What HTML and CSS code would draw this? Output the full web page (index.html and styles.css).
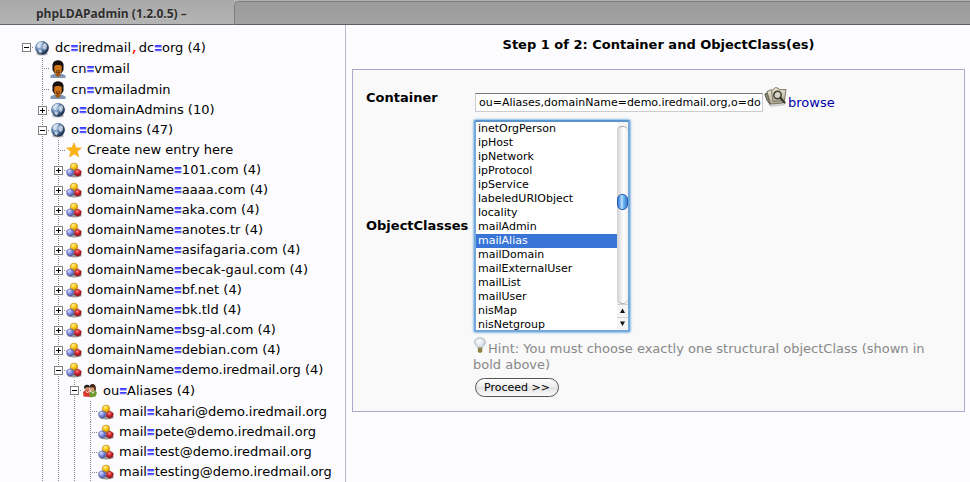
FILE: index.html
```html
<!DOCTYPE html>
<html lang="en">
<head>
<meta charset="utf-8">
<title>phpLDAPadmin (1.2.0.5) –</title>
<link rel="stylesheet" href="styles.css">
</head>
<body>
<svg class="defs" width="0" height="0" aria-hidden="true">
  <defs>
    <radialGradient id="gGlobe" cx=".35" cy=".35" r=".7"><stop offset="0" stop-color="#c9dcf0"/><stop offset=".5" stop-color="#5b7eaa"/><stop offset="1" stop-color="#14233f"/></radialGradient>
    <radialGradient id="gY" cx=".4" cy=".3" r=".7"><stop offset="0" stop-color="#fff29a"/><stop offset=".5" stop-color="#ffc814"/><stop offset="1" stop-color="#c98a00"/></radialGradient>
    <radialGradient id="gB" cx=".35" cy=".3" r=".8"><stop offset="0" stop-color="#dcdfff"/><stop offset=".5" stop-color="#7f8be0"/><stop offset="1" stop-color="#3e469c"/></radialGradient>
    <radialGradient id="gR" cx=".4" cy=".3" r=".8"><stop offset="0" stop-color="#ff8c84"/><stop offset=".45" stop-color="#d3242c"/><stop offset="1" stop-color="#7d0c14"/></radialGradient>
    <linearGradient id="gFolder" x1="0" y1="0" x2="0" y2="1"><stop offset="0" stop-color="#efe8d6"/><stop offset="1" stop-color="#b3ab94"/></linearGradient>
    <radialGradient id="gBulb" cx=".4" cy=".35" r=".7"><stop offset="0" stop-color="#fff"/><stop offset="1" stop-color="#c3d0dc"/></radialGradient>
    <symbol id="globe" viewBox="0 0 16 16">
      <ellipse cx="8" cy="14" rx="6" ry="1.6" fill="#bbb"/>
      <circle cx="8" cy="7.8" r="6.9" fill="url(#gGlobe)"/>
      <path d="M3 4.5 5.5 2 9 1.8 7.8 4 5.5 5.2 6.5 7 4.8 8.2 3 7zM9.3 4.2l2-1.2 1.8 2.3-.8 3.8-2 1-1.4-2.3zM4.5 9.5l2.8.3.8 1.8-1.6 2-1.9-1.6z" fill="#e9eff5" opacity=".7"/>
    </symbol>
    <symbol id="person" viewBox="0 0 16 18">
      <path d="M.5 18v-2.5l4-2h7l4 2V18z" fill="#7f97b5"/>
      <path d="M5.5 12h5v3.5L8 17l-2.500-1.500z" fill="#9a5513"/>
      <path d="M2.500 10V4.500C3 1.500 5.500.3 8 .3s5 1.200 5.500 4.200V10l-2 3h-7z" fill="#160f0b"/>
      <path d="M4.300 6.500C5 4.600 11 4.600 11.700 6.500v3.800c0 2.200-1.700 4-3.700 4s-3.700-1.800-3.700-4z" fill="#cf7417"/>
      <path d="M6 10.500c1.200-.8 2.800-.8 4 0v2.300L8 14l-2-1.200z" fill="#7d410f"/>
      <path d="M7 11.500h2" stroke="#b86823" stroke-width=".8"/>
    </symbol>
    <symbol id="balls" viewBox="0 0 16 16">
      <ellipse cx="8.500" cy="13.500" rx="7.300" ry="1.900" fill="#9a9a9a"/>
      <circle cx="8" cy="4.700" r="3.700" fill="url(#gY)" stroke="#a37a20" stroke-width=".5"/>
      <path d="M.7 8.500 4 6.700l3.600 1.700v3.800L4.200 14.200.9 12.300z" fill="url(#gB)" stroke="#4b5297" stroke-width=".6"/>
      <path d="M8.600 8.800 12 7l3.200 2.200-.3 3.400-3.400 1.600-3-1.700z" fill="url(#gR)" stroke="#7a1016" stroke-width=".6"/>
    </symbol>
    <symbol id="star" viewBox="0 0 16 16">
      <path d="M8 .8l2 4.900 5.400.3-4.200 3.500 1.700 5.300L8.200 12l-4.700 3 1.200-5.400L.6 6l5.300-.4z" fill="#fcb316" stroke="#f0a010" stroke-width=".5"/>
    </symbol>
    <symbol id="group" viewBox="0 0 16 16">
      <path d="M1.500 13.500 1 9l2.500-2h4L8 14z" fill="#d8392d"/>
      <path d="M8 14.500 7.500 9.500l3-2h3L15 10l-1.500 3.500z" fill="#6d9a2b"/>
      <circle cx="5" cy="5.300" r="2.500" fill="#c98b61"/>
      <path d="M2 5.500C1.700 2.500 3.500 1.600 5.500 1.800s2.500 1.700 2.300 2.900L5.500 4z" fill="#222"/>
      <circle cx="10.500" cy="5.800" r="2.500" fill="#d69b71"/>
      <path d="M7.500 4.500C7.500 2 9 .9 10.800 1s3.700 2 3 6.500L12.500 8l-.5-3.500z" fill="#462719"/>
      <path d="M4 8l1.500 2L7 8M9.500 8.500l1.300 1.800 1.500-2" stroke="#fff" stroke-width=".8" fill="none"/>
    </symbol>
    <symbol id="browse" viewBox="0 0 24 22">
      <path d="M4 18.500 22 17l-2 2.500L7 21z" fill="#aaa" opacity=".5"/>
      <path d="M.8 8l3-1.200L6 18.500 2.800 14z" fill="#8c8674" stroke="#4a473e" stroke-width=".8"/>
      <path d="M3 5.500 7.500 3.500 8.500 5 20.500 4.500 18.500 17 6.500 18z" fill="url(#gFolder)" stroke="#69655a" stroke-width=".9"/>
      <path d="M7.500 5 11.500 1.500l3 .8.500 1.400L22 3.500 20.500 14.500 9 15.500z" fill="url(#gFolder)" stroke="#706b5f" stroke-width=".9"/>
      <circle cx="13.500" cy="9" r="3.700" fill="#d6d4c6" stroke="#414137" stroke-width="1.500"/>
      <path d="M16.300 11.800 20.500 16.500" stroke="#3c392e" stroke-width="2.300" stroke-linecap="round"/>
    </symbol>
    <symbol id="bulb" viewBox="0 0 14 17">
      <path d="M4.500 11C4.500 9 1.200 8.300 1.200 5.200 1.200 2.400 3.600.8 6.500.8s5.300 1.600 5.300 4.400c0 3.100-3.200 3.800-3.200 5.800z" fill="url(#gBulb)" stroke="#a6afb8" stroke-width=".9"/>
      <path d="M4.400 10.500h4.300v4L7.500 16h-2l-1.100-1.500z" fill="#a99958"/>
      <path d="M4.400 12h4.300M4.400 14h4.300" stroke="#60572f" stroke-width=".7"/>
    </symbol>
  </defs>
</svg>

<header class="tabs"><div class="tab">phpLDAPadmin (1.2.0.5) –</div><div class="strip"></div></header>

<div class="page">
  <nav class="sidebar">
    <ul class="tree">
      <li>
        <div class="row tall"><span class="knot"><i class="box"></i></span><svg class="icon"><use href="#globe"/></svg><span class="name">dc<b>=</b>iredmail<b class="comma">,</b>dc<b>=</b>org (4)</span></div>
        <ul>
          <li><div class="row tall"><span class="knot"></span><svg class="icon person"><use href="#person"/></svg><span class="name">cn<b>=</b>vmail</span></div></li>
          <li><div class="row tall"><span class="knot"></span><svg class="icon person"><use href="#person"/></svg><span class="name">cn<b>=</b>vmailadmin</span></div></li>
          <li><div class="row"><span class="knot"><i class="box plus"></i></span><svg class="icon"><use href="#globe"/></svg><span class="name">o<b>=</b>domainAdmins (10)</span></div></li>
          <li>
            <div class="row"><span class="knot"><i class="box"></i></span><svg class="icon"><use href="#globe"/></svg><span class="name">o<b>=</b>domains (47)</span></div>
            <ul>
              <li><div class="row"><span class="knot"></span><svg class="icon"><use href="#star"/></svg><span class="name">Create new entry here</span></div></li>
              <li><div class="row"><span class="knot"><i class="box plus"></i></span><svg class="icon"><use href="#balls"/></svg><span class="name">domainName<b>=</b>101.com (4)</span></div></li>
              <li><div class="row"><span class="knot"><i class="box plus"></i></span><svg class="icon"><use href="#balls"/></svg><span class="name">domainName<b>=</b>aaaa.com (4)</span></div></li>
              <li><div class="row"><span class="knot"><i class="box plus"></i></span><svg class="icon"><use href="#balls"/></svg><span class="name">domainName<b>=</b>aka.com (4)</span></div></li>
              <li><div class="row"><span class="knot"><i class="box plus"></i></span><svg class="icon"><use href="#balls"/></svg><span class="name">domainName<b>=</b>anotes.tr (4)</span></div></li>
              <li><div class="row"><span class="knot"><i class="box plus"></i></span><svg class="icon"><use href="#balls"/></svg><span class="name">domainName<b>=</b>asifagaria.com (4)</span></div></li>
              <li><div class="row"><span class="knot"><i class="box plus"></i></span><svg class="icon"><use href="#balls"/></svg><span class="name">domainName<b>=</b>becak-gaul.com (4)</span></div></li>
              <li><div class="row"><span class="knot"><i class="box plus"></i></span><svg class="icon"><use href="#balls"/></svg><span class="name">domainName<b>=</b>bf.net (4)</span></div></li>
              <li><div class="row"><span class="knot"><i class="box plus"></i></span><svg class="icon"><use href="#balls"/></svg><span class="name">domainName<b>=</b>bk.tld (4)</span></div></li>
              <li><div class="row"><span class="knot"><i class="box plus"></i></span><svg class="icon"><use href="#balls"/></svg><span class="name">domainName<b>=</b>bsg-al.com (4)</span></div></li>
              <li><div class="row"><span class="knot"><i class="box plus"></i></span><svg class="icon"><use href="#balls"/></svg><span class="name">domainName<b>=</b>debian.com (4)</span></div></li>
              <li>
                <div class="row"><span class="knot"><i class="box"></i></span><svg class="icon"><use href="#balls"/></svg><span class="name">domainName<b>=</b>demo.iredmail.org (4)</span></div>
                <ul>
                  <li>
                    <div class="row tall"><span class="knot"><i class="box"></i></span><svg class="icon"><use href="#group"/></svg><span class="name">ou<b>=</b>Aliases (4)</span></div>
                    <ul>
                      <li><div class="row tall"><span class="knot"></span><svg class="icon"><use href="#balls"/></svg><span class="name">mail<b>=</b>kahari@demo.iredmail.org</span></div></li>
                      <li><div class="row"><span class="knot"></span><svg class="icon"><use href="#balls"/></svg><span class="name">mail<b>=</b>pete@demo.iredmail.org</span></div></li>
                      <li><div class="row"><span class="knot"></span><svg class="icon"><use href="#balls"/></svg><span class="name">mail<b>=</b>test@demo.iredmail.org</span></div></li>
                      <li><div class="row"><span class="knot"></span><svg class="icon"><use href="#balls"/></svg><span class="name">mail<b>=</b>testing@demo.iredmail.org</span></div></li>
                    </ul>
                  </li>
                </ul>
              </li>
            </ul>
          </li>
        </ul>
      </li>
    </ul>
  </nav>

  <main class="content">
    <h1>Step 1 of 2: Container and ObjectClass(es)</h1>
    <form class="panel">
      <label class="label top" for="container">Container</label>
      <div class="field">
        <input id="container" type="text" value="ou=Aliases,domainName=demo.iredmail.org,o=domains,dc=iredmail,dc=org">
        <a class="browse" href="#"><svg><use href="#browse"/></svg>browse</a>
      </div>
      <label class="label" for="classes">ObjectClasses</label>
      <div class="listbox">
        <select id="classes" size="15">
          <option>inetOrgPerson</option><option>ipHost</option><option>ipNetwork</option><option>ipProtocol</option><option>ipService</option><option>labeledURIObject</option><option>locality</option><option>mailAdmin</option><option selected>mailAlias</option><option>mailDomain</option><option>mailExternalUser</option><option>mailList</option><option>mailUser</option><option>nisMap</option><option>nisNetgroup</option>
        </select>
        <div class="scroll" aria-hidden="true">
          <span class="track"><span class="thumb"></span></span>
          <svg class="arrows" viewBox="0 0 11 26"><path d="M0 .5h11M0 13.500h11" stroke="#d0d0d0"/><path d="M5.500 4.500 8 9H3zM5.500 22 8 17.500H3z" fill="#111"/></svg>
        </div>
      </div>
      <div class="after">
        <p class="hint"><svg><use href="#bulb"/></svg>Hint: You must choose exactly one structural objectClass (shown in bold above)</p>
        <button type="button">Proceed &gt;&gt;</button>
      </div>
    </form>
  </main>
</div>
</body>
</html>
```
FILE: styles.css
```css
* { box-sizing: border-box; }
body {
  margin: 0;
  background: #fcfcfe;
  color: #000;
  font: 13px/20px Verdana, "DejaVu Sans", sans-serif;
  overflow: hidden;
}
.defs { position: absolute; }

.tabs { display: flex; height: 25px; background: #b2b2b2; }
.tab {
  width: 234px;
  padding-left: 36px;
  border-bottom: 1px solid #686868;
  background: linear-gradient(#a8a8a8, #b4b4b4);
  color: #2e2e2e;
  font: bold 12px/27px "Lucida Grande", "Open Sans", sans-serif;
  white-space: nowrap;
  text-shadow: 0 1px 0 #c8c8c8;
}
.strip {
  flex: 1;
  border: 1px solid #7d7d7d;
  border-width: 1px 0 1px 1px;
  border-bottom-color: #606060;
  border-top-left-radius: 5px;
  background: linear-gradient(#9b9b9b, #a2a2a2);
  margin-top: 1px;
}

.page { display: flex; min-height: calc(100vh - 25px); }
.sidebar {
  flex: 0 0 346px;
  padding: 12px 0 0 18px;
  border-right: 1px solid #b8b8d0;
  white-space: nowrap;
}
ul { list-style: none; margin: 0; padding: 0; }
.tree ul { margin-left: 16px; }
.tree ul > li {
  background: linear-gradient(#888 50%, transparent 50%) 8px 0 / 1px 2px repeat-y;
}
.row { display: flex; align-items: center; height: 20px; }
.row.tall { height: 21px; }
.knot {
  display: flex;
  align-items: center;
  width: 16px;
  height: 15px;
  padding-left: 4px;
  background: linear-gradient(90deg, #888 50%, transparent 50%) 8px 7px / 2px 1px repeat-x;
  background-clip: content-box;
}
.knot:empty { padding-left: 8px; }
.box {
  width: 9px;
  height: 9px;
  border: 1px solid #808080;
  background: linear-gradient(#000, #000) center / 5px 1px no-repeat #fff;
}
.box.plus {
  background: linear-gradient(#000, #000) center / 5px 1px no-repeat, linear-gradient(#000, #000) center / 1px 5px no-repeat #fff;
}
.icon { width: 16px; height: 16px; margin-right: 5px; }
.icon.person { height: 18px; }
.name b {
  color: #3c3cff;
  font: bold 13px/13px "Liberation Mono", monospace;
  text-shadow: 0 1px 0 #7a7aff;
}
.name b.comma { color: #f00; text-shadow: none; }

.content { flex: 1; padding: 10px 5px 0 6px; }
h1 { margin: 0 0 14px; font-size: 13px; line-height: 20px; text-align: center; }
.panel {
  display: grid;
  grid-template-columns: 107px 1fr;
  align-items: center;
  padding: 16px 13px 14px;
  border: 1px solid #aaaacc;
  background: #f9f9f9;
}
.label { font-weight: bold; white-space: nowrap; }
.label.top { align-self: start; padding-top: 2px; }
.field { display: flex; align-items: flex-start; height: 34px; margin-left: 2px; }
input {
  width: 288px;
  height: 19px;
  margin-top: 7px;
  padding: 0 1px 0 3px;
  border: 1px solid #ccc;
  border-top: 1px solid #777;
  border-radius: 0;
  background: #fff;
  color: #000;
  font: 11px "Lucida Grande", "DejaVu Sans", sans-serif;
}
.browse { display: flex; margin-left: 1px; color: #0000aa; text-decoration: none; line-height: 34px; }
.browse svg { width: 24px; height: 22px; }
.listbox {
  display: flex;
  width: 156px;
  margin-left: 1px;
  border: 2px solid #6fa5d8;
  border-color: #5b93cb #74a9db #74a9db;
  border-radius: 2px;
  background: #fff;
  box-shadow: 0 0 2px 1px #8dbbe6;
}
select {
  flex: 1;
  min-width: 0;
  height: 208px;
  padding: 0;
  border: 0;
  outline: 0;
  background: #fff;
  color: #000;
  overflow: hidden;
  scrollbar-width: none;
  font: 11px/14px "Lucida Grande", "DejaVu Sans", sans-serif;
}
option { height: 14px; min-height: 14px; padding: 0 2px; line-height: 14px; }
option:checked {
  background: linear-gradient(#3875d7, #3875d7);
  -webkit-text-fill-color: #fff;
}
.scroll { display: flex; flex-direction: column; width: 11px; height: 208px; background: #f4f4f4; }
.track {
  flex: 1;
  margin-top: 4px;
  padding-top: 67px;
  border-top: 1px solid #aaa;
  border-bottom: 1px solid #aaa;
  border-radius: 5px;
  background: linear-gradient(90deg, #d0d0d0, #fff 60%, #eee);
}
.thumb {
  display: block;
  height: 16px;
  border: 1px solid #2a5fae;
  border-radius: 5px;
  background: linear-gradient(90deg, #2f78d6, #c2e4ff 45%, #6cb8f4 60%, #3a7fd0);
}
.arrows { height: 26px; }
.after { grid-column: 2; }
.hint { margin: 5px 0; color: #888; line-height: 16px; }
.hint svg { width: 15px; height: 17px; vertical-align: -1px; }
button {
  display: block;
  height: 19px;
  margin-left: 2px;
  padding: 0 8px;
  border: 1px solid #555;
  border-radius: 10px;
  background: linear-gradient(#fff, #ececec 50%, #e2e2e2 50%, #fafafa);
  color: #000;
  font: 11px "Lucida Grande", "DejaVu Sans", sans-serif;
}
```
